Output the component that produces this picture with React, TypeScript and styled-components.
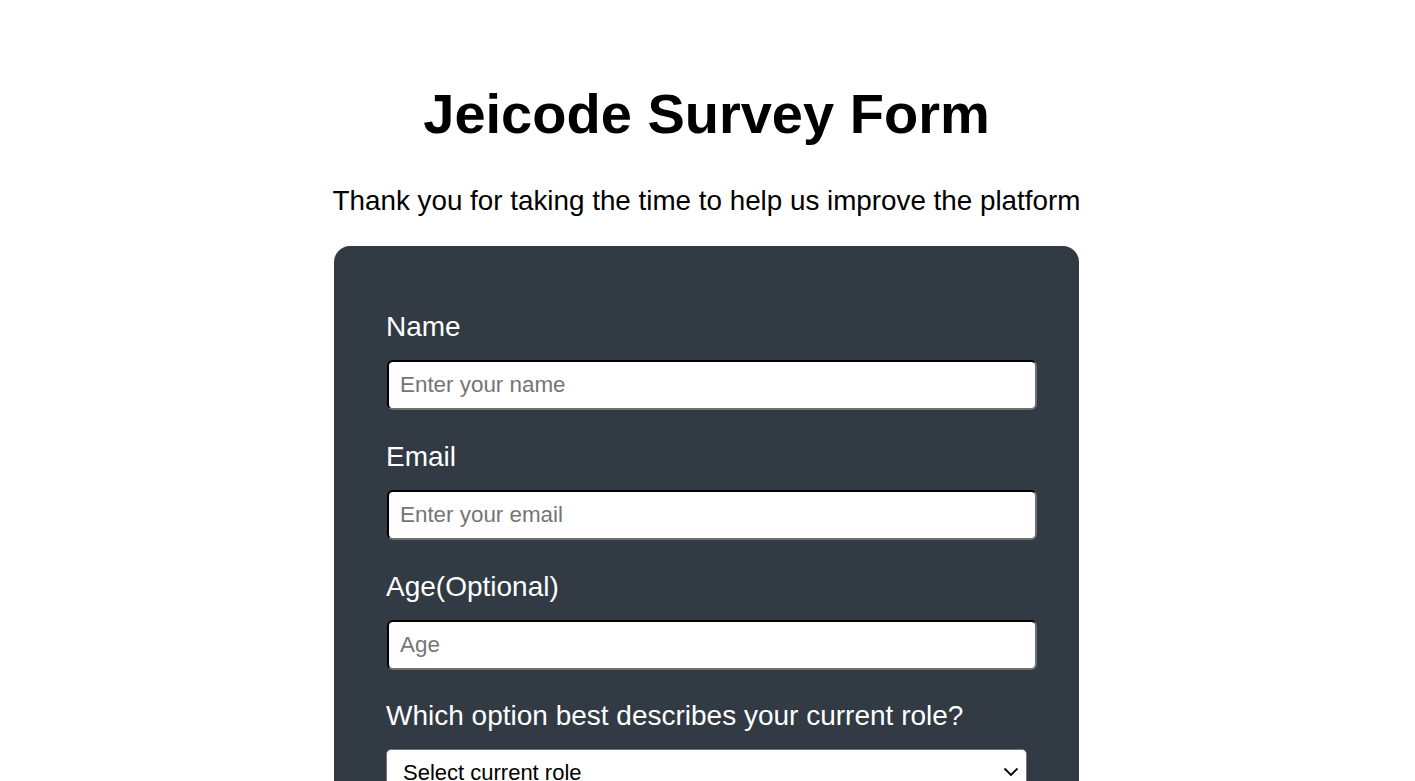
import React from "react";
import styled, { createGlobalStyle } from "styled-components";

const GlobalStyle = createGlobalStyle`
  * { box-sizing: border-box; }
  body {
    margin: 0;
    background: #ffffff;
    font-family: "Liberation Sans", Arial, sans-serif;
    color: #000;
  }
`;

const Page = styled.main`
  display: flex;
  flex-direction: column;
  align-items: center;
  padding: 82px 2px 0 0;
`;

const Title = styled.h1`
  margin: 0;
  font-size: 56px;
  font-weight: 700;
  line-height: 64px;
`;

const Subtitle = styled.p`
  margin: 40px 0 0;
  font-size: 27.8px;
  line-height: 30px;
`;

const Card = styled.form`
  margin-top: 30px;
  width: 745px;
  background: #323a44;
  border-radius: 16px;
  padding: 64px 52px 40px;
  display: flex;
  flex-direction: column;
  gap: 30px;
`;

const Field = styled.div<{ $tight?: boolean }>`
  display: flex;
  flex-direction: column;
  gap: 16px;
  margin-top: ${(p) => (p.$tight ? "-1px" : "0")};
`;

const Label = styled.label`
  color: #ffffff;
  font-size: 28px;
  line-height: 34px;
`;

const Input = styled.input`
  width: 650px;
  height: 50px;
  margin-left: 1px;
  padding: 0 11px;
  font-family: "Liberation Sans", Arial, sans-serif;
  font-size: 22.4px;
  color: #000;
  background: #fff;
  border: 2px inset #767676;
  border-top-color: #1f1f1f;
  border-left-color: #1f1f1f;
  border-right-color: #6f6f6f;
  border-bottom-color: #6f6f6f;
  border-radius: 6px;
  &::placeholder { color: #757575; }
`;

const SelectBox = styled.div`
  position: relative;
  width: 641px;
  height: 50px;
`;

const Select = styled.select`
  appearance: none;
  width: 100%;
  height: 100%;
  padding: 0 16px 4px;
  font-family: "Liberation Sans", Arial, sans-serif;
  font-size: 22px;
  color: #000;
  background: #fff;
  border: 1px solid #767676;
  border-radius: 5px;
`;

const Chevron = styled.svg`
  position: absolute;
  right: 8px;
  top: 18px;
  pointer-events: none;
`;

export default function App() {
  return (
    <>
      <GlobalStyle />
      <Page>
        <Title>Jeicode Survey Form</Title>
        <Subtitle>Thank you for taking the time to help us improve the platform</Subtitle>
        <Card>
          <Field>
            <Label htmlFor="name">Name</Label>
            <Input id="name" placeholder="Enter your name" />
          </Field>
          <Field>
            <Label htmlFor="email">Email</Label>
            <Input id="email" placeholder="Enter your email" />
          </Field>
          <Field>
            <Label htmlFor="age">Age(Optional)</Label>
            <Input id="age" placeholder="Age" />
          </Field>
          <Field $tight>
            <Label htmlFor="role">Which option best describes your current role?</Label>
            <SelectBox>
              <Select id="role" defaultValue="">
                <option value="">Select current role</option>
                <option>Student</option>
                <option>Full Time Job</option>
                <option>Other</option>
              </Select>
              <Chevron width="16" height="10" viewBox="0 0 16 10">
                <path d="M1.5 1.5 L8 8 L14.5 1.5" fill="none" stroke="#000" strokeWidth="1.8" />
              </Chevron>
            </SelectBox>
          </Field>
        </Card>
      </Page>
    </>
  );
}
